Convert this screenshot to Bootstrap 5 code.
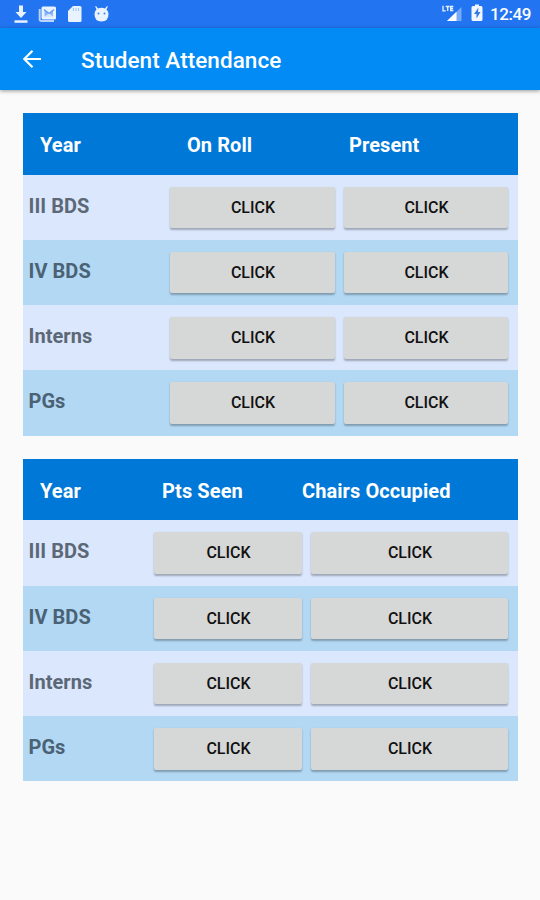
<!DOCTYPE html>
<html lang="en">
<head>
<meta charset="utf-8">
<meta name="viewport" content="width=device-width, initial-scale=1">
<title>Student Attendance</title>
<link rel="stylesheet" href="https://cdn.jsdelivr.net/npm/bootstrap@5.3.0/dist/css/bootstrap.min.css">
<style>
body{font-family:Roboto,sans-serif;background:#fafafa;min-height:900px;overflow:hidden}
.status{height:28px;background:#2374f1;padding:0 9px 0 12px}
.status svg{display:block}
.clock{font-size:17px;font-weight:500;letter-spacing:-.45px;line-height:28px;width:41px;white-space:nowrap}
.appbar{height:62px;background:#038bf5;padding:0 22px;box-shadow:0 1px 4px rgba(0,0,0,.4)}
.appbar h1{font-size:22.5px;font-weight:500;letter-spacing:.05px;line-height:28px;margin-left:37px;padding-top:2px}
main{padding:22.75px 22.5px 0 23px}
.sheet{margin-bottom:23px}
.line{display:grid;height:65.25px;background:#dbe7fd;padding-right:9.5px;column-gap:9px}
.roll .line{grid-template-columns:138px 165px 1fr}
.seen .line{grid-template-columns:122px 148px 1fr}
.line:nth-child(odd){background:#b2d8f4}
.sheet .heading{height:61.75px;background:#0078d8;color:#fff;font-size:20px;font-weight:700;letter-spacing:.08px;line-height:65px;white-space:nowrap}
.heading span:first-child{padding-left:17px}
.roll .heading span:nth-child(2){padding-left:17px}
.roll .heading span:nth-child(3){padding-left:5px}
.seen .heading span:nth-child(2){padding-left:8px}
.seen .heading span:nth-child(3){margin-left:-9px}
.label{font-size:20px;font-weight:700;letter-spacing:.05px;line-height:63px;padding-left:5.500px;color:#5c6876}
.line:nth-child(odd) .label{color:#4a6274}
.btn-key{height:41.5px;margin-top:12px;padding:0 0 0 1px;background:#d6d8d7;color:#111;font-size:16px;font-weight:500;line-height:42px;border:0;border-radius:2px;box-shadow:0 1.5px 2px rgba(0,0,0,.28)}
.btn-key:hover{background:#cccecd}
</style>
<script src="https://cdn.jsdelivr.net/npm/bootstrap@5.3.0/dist/js/bootstrap.bundle.min.js" defer></script>
</head>
<body>
<div class="status d-flex align-items-center justify-content-between text-white">
  <div class="d-flex align-items-center">
    <svg width="100" height="28" viewBox="12 0 100 28" fill="#e9f3ff">
      <path d="M19 5.5h4v6.500h3.500L21 18l-5.500-6H19z"/><path d="M14.500 20.300h13v2.500h-13z"/>
      <path d="M43 6.500h11.500q1.500 0 1.500 1.500v10q0 1.500-1.500 1.500H43q-1.500 0-1.500-1.500V8q0-1.500 1.500-1.500z"/>
      <path d="M39.700 9v10.300q0 1.700 1.700 1.700H54" fill="none" stroke="#b9d5ff" stroke-width="2"/>
      <path d="M44.500 10v6.500h8.500V10l-4 3.500z" fill="#8db7f8"/><path d="M44 9.500l5 4 5-4" fill="none" stroke="#5b97f4" stroke-width="1.200"/><path d="M44 17l5-3.500 5 3.500z" fill="#d5e6ff"/>
      <path d="M73 6h7q1.500 0 1.500 1.500v13q0 1.500-1.500 1.500H69.500Q68 22 68 20.500V11z"/>
      <path d="M73.500 8v3M76 8v3M78.500 8v3" stroke="#9cc2fb" stroke-width="1"/>
      <path d="M96 6l2 2.500q3.500-1.300 7 0L107 6l.8.500-1.300 3q2 1.700 2 4.500 0 7.500-7 7.500t-7-7.500q0-2.800 2-4.500l-1.300-3z"/>
      <circle cx="98.500" cy="13.500" r="1" fill="#3b83f0"/><circle cx="104.500" cy="13.500" r="1" fill="#3b83f0"/>
    </svg>
  </div>
  <div class="d-flex align-items-center">
    <svg width="50" height="28" viewBox="440 0 50 28">
      <path d="M461.500 7v14H447z" fill="#77aaf8"/><path d="M456.500 11.800V21H447z" fill="#fff"/>
      <path d="M443 5.800v5h2.700M445.700 6.500h4M447.700 6.500V11M453.300 6.500h-2.600v4h2.600M450.700 8.500h2.400" fill="none" stroke="#e9f3ff" stroke-width="1.300"/>
      <path d="M475 4.500h4V6h2q1.500 0 1.500 1.500v12q0 1.500-1.500 1.500h-8q-1.500 0-1.500-1.500v-12Q471.500 6 473 6h2z" fill="#f2f7ff"/>
      <path d="M478.500 7.500l-4.500 6.500h2.500v4.500l4-6.500H478z" fill="#3478e5"/>
    </svg>
    <span class="clock">12:49</span>
  </div>
</div>
<header class="appbar d-flex align-items-center text-white">
  <svg width="22" height="22" viewBox="0 0 22 22" fill="none" stroke="#fff" stroke-width="2.200" aria-label="Back"><path d="M19 11H2.500M10.500 2.800L2.300 11l8.200 8.200"/></svg>
  <h1 class="mb-0">Student Attendance</h1>
</header>
<main>
  <section class="sheet roll">
    <div class="line heading"><span>Year</span><span>On Roll</span><span>Present</span></div>
    <div class="line"><span class="label">III BDS</span><button class="btn btn-key">CLICK</button><button class="btn btn-key">CLICK</button></div>
    <div class="line"><span class="label">IV BDS</span><button class="btn btn-key">CLICK</button><button class="btn btn-key">CLICK</button></div>
    <div class="line"><span class="label">Interns</span><button class="btn btn-key">CLICK</button><button class="btn btn-key">CLICK</button></div>
    <div class="line"><span class="label">PGs</span><button class="btn btn-key">CLICK</button><button class="btn btn-key">CLICK</button></div>
  </section>
  <section class="sheet seen">
    <div class="line heading"><span>Year</span><span>Pts Seen</span><span>Chairs Occupied</span></div>
    <div class="line"><span class="label">III BDS</span><button class="btn btn-key">CLICK</button><button class="btn btn-key">CLICK</button></div>
    <div class="line"><span class="label">IV BDS</span><button class="btn btn-key">CLICK</button><button class="btn btn-key">CLICK</button></div>
    <div class="line"><span class="label">Interns</span><button class="btn btn-key">CLICK</button><button class="btn btn-key">CLICK</button></div>
    <div class="line"><span class="label">PGs</span><button class="btn btn-key">CLICK</button><button class="btn btn-key">CLICK</button></div>
  </section>
</main>
</body>
</html>
